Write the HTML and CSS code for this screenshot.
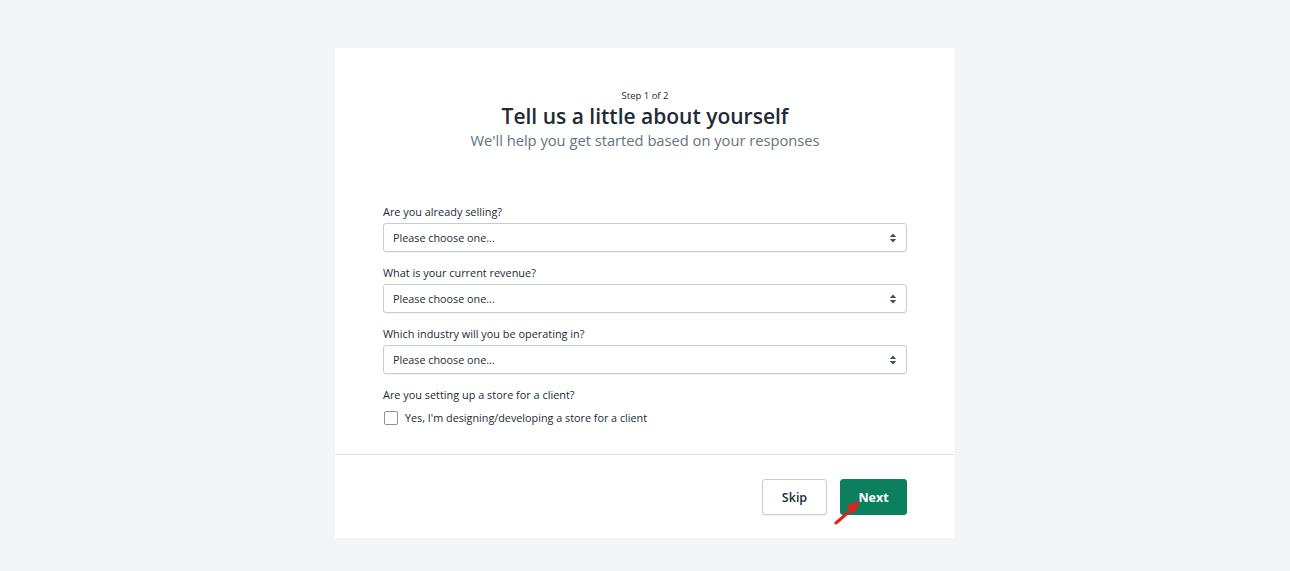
FILE: index.html
```html
<!DOCTYPE html>
<html lang="en">
<head>
    <meta charset="UTF-8">
    <meta name="viewport" content="width=device-width, initial-scale=1.0">
    <title>Tell us a little about yourself</title>
    <link rel="stylesheet" href="styles.css">
</head>
<body>

    <div class="card">
        <div class="intro">
            <p class="step">Step 1 of 2</p>
            <h1>Tell us a little about yourself</h1>
            <p class="lead">We'll help you get started based on your responses</p>
        </div>

        <form class="survey">
            <label class="field-label" for="selling">Are you already selling?</label>
            <div class="select">
                <select id="selling">
                    <option>Please choose one...</option>
                </select>
                <svg class="select-arrows" width="8" height="10" viewBox="0 0 8 10"><path d="M4 0.5 L7.2 4 H0.8 Z M4 9.5 L0.8 6 H7.2 Z" fill="#454f5b"/></svg>
            </div>

            <label class="field-label" for="revenue">What is your current revenue?</label>
            <div class="select">
                <select id="revenue">
                    <option>Please choose one...</option>
                </select>
                <svg class="select-arrows" width="8" height="10" viewBox="0 0 8 10"><path d="M4 0.5 L7.2 4 H0.8 Z M4 9.5 L0.8 6 H7.2 Z" fill="#454f5b"/></svg>
            </div>

            <label class="field-label" for="industry">Which industry will you be operating in?</label>
            <div class="select">
                <select id="industry">
                    <option>Please choose one...</option>
                </select>
                <svg class="select-arrows" width="8" height="10" viewBox="0 0 8 10"><path d="M4 0.5 L7.2 4 H0.8 Z M4 9.5 L0.8 6 H7.2 Z" fill="#454f5b"/></svg>
            </div>

            <p class="field-label">Are you setting up a store for a client?</p>
            <label class="check">
                <span class="check-box"></span>
                Yes, I'm designing/developing a store for a client
            </label>
        </form>

        <div class="footer">
            <button class="button" type="button">Skip</button>
            <span class="next-wrap">
                <button class="button primary" type="button">Next</button>
                <!-- стрелка-указатель поверх кнопки -->
                <svg class="pointer" width="32" height="30" viewBox="0 0 32 30">
                    <path d="M2 27 L18 13" stroke="#e3201b" stroke-width="3" stroke-linecap="round"/>
                    <path d="M26 5 L12.5 9.5 L20.5 17.5 Z" fill="#e3201b"/>
                </svg>
            </span>
        </div>
    </div>

</body>
</html>
```

FILE: styles.css
```css
body {
    margin: 0;
    padding: 0;
    font-family: "Open Sans", "Noto Sans", Arial, sans-serif;
    background-color: #f4f5f7;
    color: #212b36;
}

.card {
    width: 620px;
    height: 490px;
    margin: 48px auto 0;
    background: #fff;
    display: flex;
    flex-direction: column;
}

.intro {
    padding-top: 42px;
    text-align: center;
}

.step {
    margin: 0;
    font-size: 9.5px;
    line-height: 12px;
    color: #212b36;
}

.intro h1 {
    margin: 0;
    font-size: 21px;
    line-height: 28px;
    font-weight: 600;
    color: #212b36;
}

.lead {
    margin: 0;
    font-size: 14.7px;
    line-height: 20px;
    color: #637381;
}

.survey {
    flex: 1;
    padding: 54px 48px 0;
    border-bottom: 1px solid #dfe3e8;
}

.field-label {
    display: block;
    margin: 0 0 3px;
    font-size: 10.9px;
    line-height: 16px;
    color: #212b36;
}

.select {
    position: relative;
    margin-bottom: 13px;
}

.select select {
    display: block;
    width: 100%;
    height: 29px;
    margin: 0;
    padding: 0 30px 0 9px;
    font-family: inherit;
    font-size: 10.8px;
    color: #212b36;
    background: #fff;
    border: 1px solid #c4cdd5;
    border-radius: 3px;
    appearance: none;
    -webkit-appearance: none;
    box-shadow: 0 1px 0 rgba(22, 29, 37, 0.04);
}

.select-arrows {
    position: absolute;
    right: 10px;
    top: 10px;
}

.check {
    display: flex;
    align-items: center;
    gap: 7px;
    margin-top: 7px;
    padding-left: 1px;
    font-size: 10.8px;
    line-height: 16px;
    color: #212b36;
}

.check-box {
    width: 12px;
    height: 12px;
    border: 1px solid #8c9196;
    border-radius: 2px;
    background: #fff;
}

.footer {
    height: 83px;
    padding: 24px 48px 0;
    display: flex;
    justify-content: flex-end;
    align-items: flex-start;
    gap: 13px;
    box-sizing: border-box;
}

.button {
    height: 36px;
    width: 65px;
    padding: 0;
    font-family: inherit;
    font-size: 12.5px;
    font-weight: 600;
    color: #212b36;
    background: #fff;
    border: 1px solid #c4cdd5;
    border-radius: 3px;
    box-shadow: 0 1px 0 rgba(22, 29, 37, 0.05);
    cursor: pointer;
}

.button.primary {
    width: 67px;
    color: #fff;
    font-weight: 700;
    background: #0c7f5f;
    border-color: #0c7f5f;
}

.next-wrap {
    position: relative;
    display: inline-block;
}

.pointer {
    position: absolute;
    left: -6px;
    top: 17px;
}
```
